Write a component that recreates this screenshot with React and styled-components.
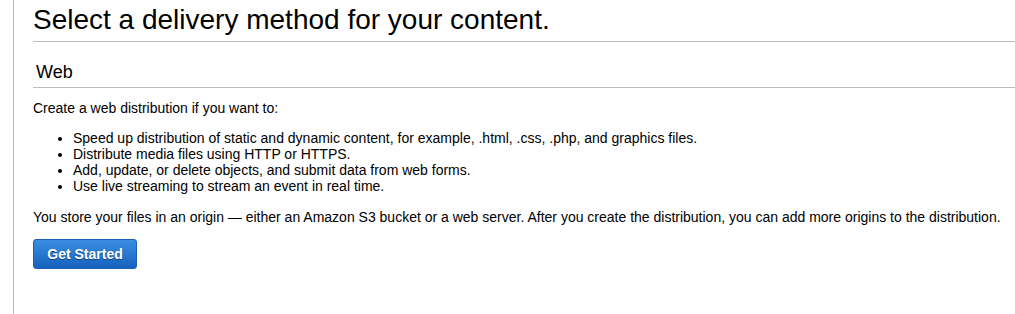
import React from 'react';
import styled, { createGlobalStyle } from 'styled-components';

const GlobalStyle = createGlobalStyle`
  body {
    margin: 0;
    background: #fff;
    font-family: "Liberation Sans", Arial, sans-serif;
    color: #000;
  }
`;

const Page = styled.div`
  margin-left: 13px;
  border-left: 1px solid #bbb;
  padding-left: 19px;
  min-height: 314px;
`;

const Title = styled.h1`
  margin: 0;
  padding: 4px 0 5px;
  font-size: 28px;
  font-weight: normal;
  line-height: 32px;
  border-bottom: 1px solid #bbb;
`;

const SectionTitle = styled.h2`
  margin: 0;
  padding: 19px 0 4px 3px;
  font-size: 18px;
  font-weight: normal;
  line-height: 22px;
  border-bottom: 1px solid #bbb;
`;

const Text = styled.p`
  margin: ${(p) => p.$gap || 12}px 0 0;
  font-size: 14px;
  line-height: 16px;
`;

const List = styled.ul`
  margin: 14px 0 0;
  padding-left: 40px;
  font-size: 14px;
  line-height: 16px;
`;

const Button = styled.button`
  margin-top: 14px;
  width: 104px;
  height: 30px;
  border: 1px solid #1a5fb4;
  border-radius: 3px;
  background: linear-gradient(#3b8ee2, #1562be);
  color: #fff;
  font-family: "Liberation Sans", Arial, sans-serif;
  font-size: 14px;
  font-weight: bold;
  text-shadow: 0 1px 1px rgba(0, 0, 0, 0.4);
  cursor: pointer;
`;

const items = [
  'Speed up distribution of static and dynamic content, for example, .html, .css, .php, and graphics files.',
  'Distribute media files using HTTP or HTTPS.',
  'Add, update, or delete objects, and submit data from web forms.',
  'Use live streaming to stream an event in real time.',
];

export default function App() {
  return (
    <>
      <GlobalStyle />
      <Page>
        <Title>Select a delivery method for your content.</Title>
        <SectionTitle>Web</SectionTitle>
        <Text>Create a web distribution if you want to:</Text>
        <List>
          {items.map((item) => (
            <li key={item}>{item}</li>
          ))}
        </List>
        <Text $gap={15}>
          You store your files in an origin — either an Amazon S3 bucket or a web server. After you create the
          distribution, you can add more origins to the distribution.
        </Text>
        <Button>Get Started</Button>
      </Page>
    </>
  );
}
